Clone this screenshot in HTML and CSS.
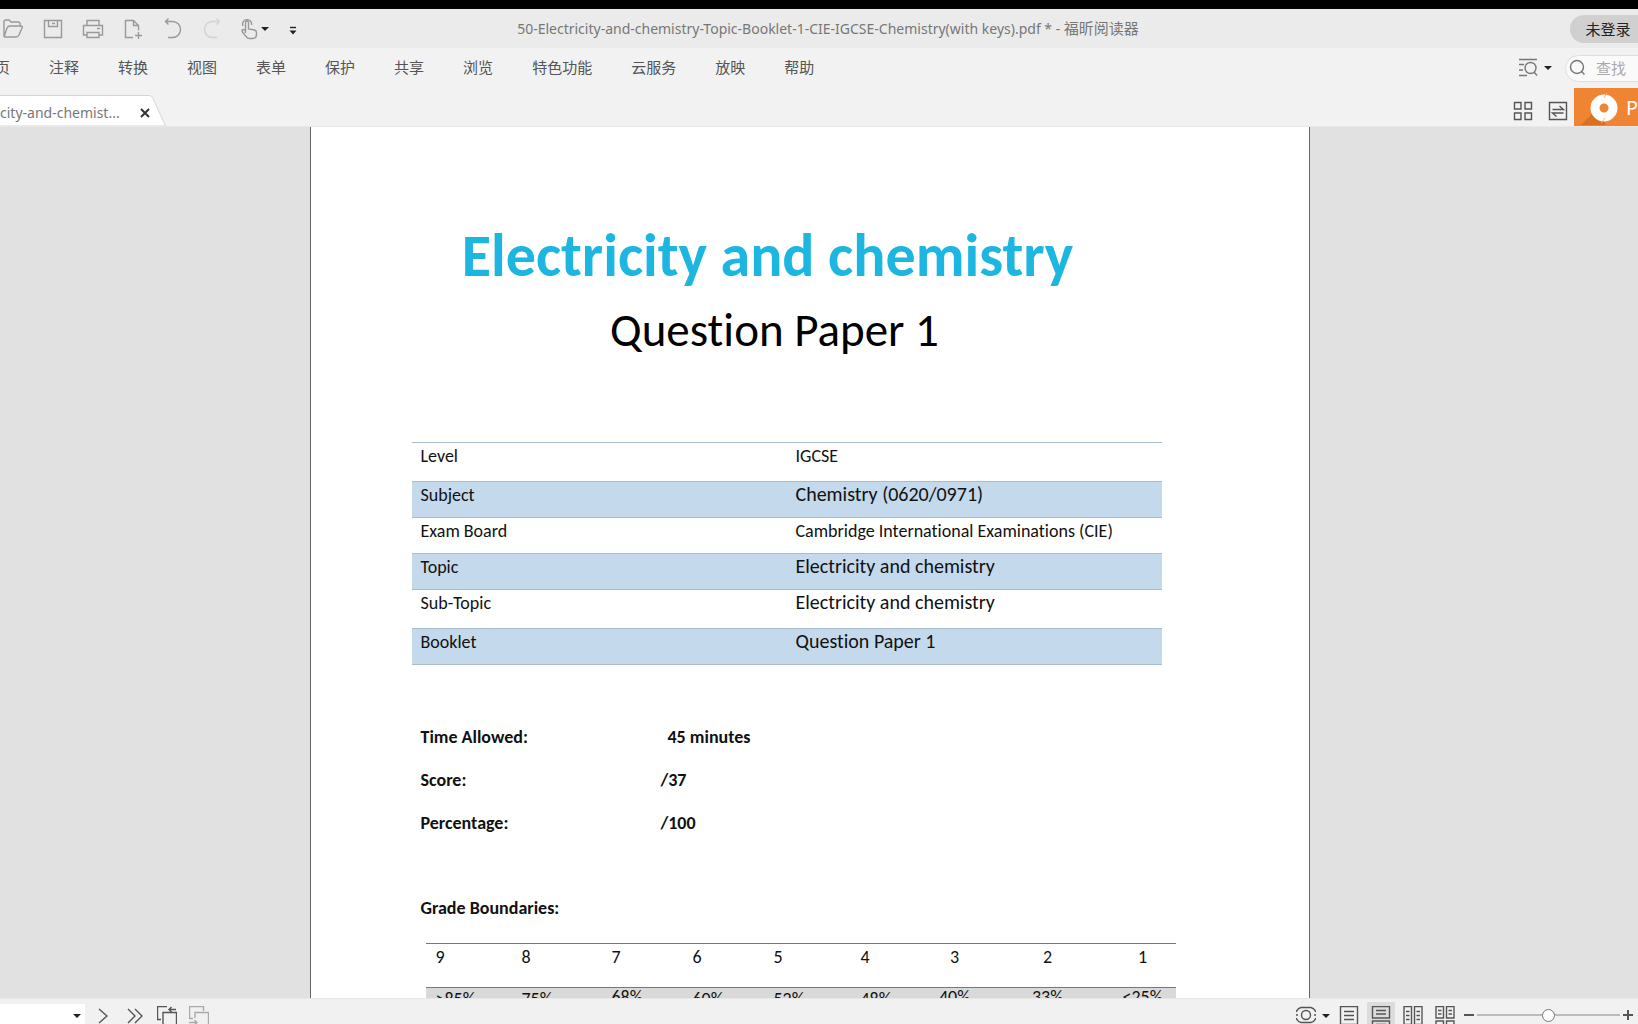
FILE: index.html
```html
<!DOCTYPE html>
<html lang="zh-CN">
<head>
<meta charset="utf-8">
<title>福昕阅读器</title>
<link rel="stylesheet" href="styles.css">
</head>
<body>
<header class="titlebar">
  <div class="quick">
    <button aria-label="打开"><svg class="icon" viewBox="0 0 24 24"><path d="M3 20V5q0-2 2-2h3l2 2h7q2 0 2 2v2M3 20L6 11q1-2 3-2h11q2 0 1 2l-3 7q-1 2-3 2H4q-1 0-1-2"/></svg></button>
    <button aria-label="保存"><svg class="icon" viewBox="0 0 24 24"><path d="M3.500 3.500h17v17h-17zM7.500 3.500v6h9v-6M11 6.500h3"/></svg></button>
    <button aria-label="打印"><svg class="icon" viewBox="0 0 24 24"><path d="M6 8V3.500h12V8M6 18H2.500V8.500h19V18H18M6 15.500h12v5H6zM16 11.500h3"/></svg></button>
    <button aria-label="新建"><svg class="icon" viewBox="0 0 24 24"><path d="M12 20.500H4.500v-17h8l5 5v5M12.500 3.500v5h5M17.500 15v7M14 18.500h7"/></svg></button>
    <button aria-label="撤销"><svg class="icon" viewBox="0 0 24 24"><path d="M4.500 4.500h7a7.500 7.500 0 0 1 0 16H7M7.500 1.500l-3 3 3 3"/></svg></button>
    <button aria-label="重做"><svg class="icon faint" viewBox="0 0 24 24"><path d="M18.500 4.500h-7a7.500 7.500 0 0 0 0 16H16M15.500 1.500l3 3-3 3"/></svg></button>
    <button class="with-caret" aria-label="手型工具"><svg class="icon" viewBox="0 0 24 24"><path d="M6.500 16V6q0-2 1.500-2t1.500 2v6l6 1q2 .5 2 2.500v2q0 4-4 4h-3q-2 0-3-1.500l-4-5q-1-2 .5-2.500l3 1M4 9a4.500 4.500 0 1 1 8.500-1"/></svg><span class="caret"></span></button>
    <button aria-label="自定义"><svg class="icon" viewBox="0 0 24 24"><path class="dark" d="M9 10.500h6"/><path class="solid" d="M8.500 13.500h7l-3.500 4z"/></svg></button>
  </div>
  <h1 class="title">50-Electricity-and-chemistry-Topic-Booklet-1-CIE-IGCSE-Chemistry(with keys).pdf * - <span>福昕阅读器</span></h1>
  <button class="login">未登录</button>
</header>

<div class="menubar">
  <nav class="menu">
    <a href="#">主页</a><a href="#">注释</a><a href="#">转换</a><a href="#">视图</a><a href="#">表单</a><a href="#">保护</a><a href="#">共享</a><a href="#">浏览</a><a href="#">特色功能</a><a href="#">云服务</a><a href="#">放映</a><a href="#">帮助</a>
  </nav>
  <button class="find-mode" aria-label="高级查找"><svg class="icon mid" viewBox="0 0 20 20"><path d="M1 1.500h18M1 6.500h5M1 12h4M1 17.500h8"/><circle cx="12.500" cy="10" r="5.500"/><path d="M16 14l3 3.500"/></svg><span class="caret"></span></button>
  <label class="search"><svg class="icon mid" viewBox="0 0 20 20"><circle cx="9" cy="9" r="6.500"/><path d="M13.500 13.500l3 3"/></svg><input type="text" placeholder="查找" aria-label="查找"></label>
</div>

<div class="tabbar">
  <div class="tab">
    <svg class="tab-shape" viewBox="0 0 166 31"><path d="M-1 .5H149q3 0 4 3L165.500 31H-1z"/></svg>
    <span>city-and-chemist...</span>
    <button aria-label="关闭"><svg viewBox="0 0 12 12"><path d="M2 2l8 8M10 2l-8 8"/></svg></button>
  </div>
  <div class="tab-tools">
    <button aria-label="缩略图"><svg class="icon deep" viewBox="0 0 20 20"><path d="M1.500 1.500h6.500v6.500h-6.500zM12 1.500h6.500v6.500H12zM1.500 12h6.500v6.500h-6.500zM12 12h6.500v6.500H12z"/></svg></button>
    <button aria-label="切换"><svg class="icon deep" viewBox="0 0 20 20"><path d="M1.500 1.500h17v17h-17zM4.500 8.500h11l-4-3.500M15.500 12h-11l4 3.500"/></svg></button>
    <button class="promo"><svg viewBox="0 0 30 34"><path class="shade" d="M-8 34L6 20l10 10v4z"/><circle cx="15" cy="17" r="9"/><path class="cut" d="M18 2l-3 5M12 32l4-5"/></svg>P</button>
  </div>
</div>

<main class="viewer">
  <article class="page">
    <h2>Electricity and chemistry</h2>
    <p class="subtitle">Question Paper 1</p>
    <table class="info">
      <tr class="tall"><th>Level</th><td>IGCSE</td></tr>
      <tr><th>Subject</th><td class="wide">Chemistry (0620/0971)</td></tr>
      <tr><th>Exam Board</th><td>Cambridge International Examinations (CIE)</td></tr>
      <tr><th>Topic</th><td class="wide">Electricity and chemistry</td></tr>
      <tr class="tall"><th>Sub-Topic</th><td class="wide">Electricity and chemistry</td></tr>
      <tr><th>Booklet</th><td class="wide">Question Paper 1</td></tr>
    </table>
    <dl class="facts">
      <dt>Time Allowed:</dt><dd class="indent">45 minutes</dd>
      <dt>Score:</dt><dd>/37</dd>
      <dt>Percentage:</dt><dd>/100</dd>
    </dl>
    <h3>Grade Boundaries:</h3>
    <table class="grades">
      <colgroup><col class="c9"><col class="c8"><col class="c7"><col class="c6"><col class="c5"><col class="c4"><col class="c3"><col class="c2"><col class="c1"></colgroup>
      <tr><th>9</th><th>8</th><th>7</th><th>6</th><th>5</th><th>4</th><th class="mid-col">3</th><th class="mid-col">2</th><th class="mid-col">1</th></tr>
      <tr><td>&gt;85%</td><td>75%</td><td class="raised">68%</td><td>60%</td><td>52%</td><td>48%</td><td class="mid-col raised">40%</td><td class="mid-col raised">33%</td><td class="mid-col raised">&lt;25%</td></tr>
    </table>
  </article>
</main>

<footer class="statusbar">
  <div class="pager">
    <button class="page-select" aria-label="页码"><span class="caret"></span></button>
    <button aria-label="下一页"><svg class="icon deep" viewBox="0 0 20 20"><path d="M6 3l8 7-8 7"/></svg></button>
    <button aria-label="最后一页"><svg class="icon deep" viewBox="0 0 20 20"><path d="M3 3l7 7-7 7M10 3l7 7-7 7"/></svg></button>
    <button aria-label="上一视图"><svg class="icon deep" viewBox="0 0 20 20"><path d="M4 13.500H.500v-13H10M6 6.500h13.500v13H6zM19 3.500h-7M14.500 1l-2.500 2.500 2.500 2.500"/></svg></button>
    <button aria-label="下一视图"><svg class="icon pale" viewBox="0 0 20 20"><path d="M4 12.500H.500v-12h14V5M6 12V6.500h13.500v13H11M0 16.500h8M5.500 14l2.500 2.500-2.500 2.500"/></svg></button>
  </div>
  <div class="view-tools">
    <button class="eye" aria-label="阅读模式"><svg class="icon deep" viewBox="0 0 20 20"><circle cx="10" cy="9" r="4.500"/><path d="M0 6q2-4 5-4.500h10q3 .5 5 4.500M0 12q2 4 5 4.500h10q3-.5 5-4.500M0 9h2M18 9h2"/></svg><span class="caret"></span></button>
    <button aria-label="单页"><svg class="icon deep" viewBox="0 0 20 20"><path d="M1.500.500h17v18h-17zM5 5.500h10M5 9.500h10M5 13.500h10"/></svg></button>
    <button class="active" aria-label="连续"><svg class="icon deep" viewBox="0 0 20 20"><path d="M1.500.500h17v11.500h-17zM5 4.500h10M5 8h10M1.500 20v-5h17v5M5 18.500h10"/></svg></button>
    <button aria-label="双页"><svg class="icon deep" viewBox="0 0 20 20"><path d="M1 .500h7.500v18H1zM11.500.500H19v18h-7.500zM3 5.500h3.500M3 9.500h3.500M3 13.500h3.500M13.500 5.500H17M13.500 9.500H17M13.500 13.500H17"/></svg></button>
    <button aria-label="连续双页"><svg class="icon deep" viewBox="0 0 20 20"><path d="M1 .500h7.500v11.500H1zM11.500.500H19v11.500h-7.500zM3 4.500h3.500M3 8h3.500M13.500 4.500H17M13.500 8H17M1 20v-5h7.500v5M11.500 20v-5H19v5"/></svg></button>
    <button class="zoom" aria-label="缩小"><svg viewBox="0 0 12 20"><path d="M1 9h10"/></svg></button>
    <input class="slider" type="range" min="0" max="100" value="50" aria-label="缩放">
    <button class="zoom" aria-label="放大"><svg viewBox="0 0 12 20"><path d="M1 9h10M6 4v10"/></svg></button>
  </div>
</footer>
</body>
</html>
```
FILE: styles.css
```css
* { box-sizing: border-box; }

body {
  margin: 0;
  height: 100vh;
  display: flex;
  flex-direction: column;
  overflow: hidden;
  border-top: 9px solid #000;
  background: #f2f2f2;
  color: #555;
  font: 15px/20px "Noto Sans", "Noto Sans CJK SC", sans-serif;
}

button {
  flex: none;
  display: flex;
  align-items: center;
  justify-content: center;
  padding: 0;
  border: 0;
  background: none;
  color: inherit;
  font: inherit;
}

.icon {
  flex: none;
  width: 20px;
  height: 20px;
  fill: none;
  stroke: #999;
  stroke-width: 1.4;
}
.icon.faint { stroke: #d2d2d2; }
.icon.mid { stroke: #777; }
.icon.deep { stroke: #555; }
.icon.pale { stroke: #aaa; }
.icon .dark { stroke: #222; }
.icon .solid { fill: #222; stroke: none; }

.caret {
  flex: none;
  border: 4px solid transparent;
  border-top-color: #222;
  border-bottom: 0;
}

/* Title bar */
.titlebar {
  flex: none;
  height: 39px;
  display: grid;
  grid-template-columns: 1fr auto 1fr;
  align-items: center;
  background: #ebebeb;
}
.quick { display: flex; gap: 16px; padding-left: 1px; }
.quick button { width: 24px; }
.quick .icon { width: 24px; height: 24px; }
.quick .with-caret { width: 24px; justify-content: flex-start; }
.with-caret .icon { margin: 0 -2px 0 -2px; }
.title {
  margin: 0 0 0 18px;
  color: #777;
  font-size: 14px;
  font-weight: 400;
  white-space: nowrap;
}
.title span { font-size: 15px; }
.login {
  justify-self: end;
  width: 84px;
  height: 28px;
  margin-right: -16px;
  padding-right: 8px;
  border-radius: 14px;
  background: #d0d0d0;
  color: #222;
}

/* Menu */
.menubar {
  flex: none;
  height: 40px;
  display: flex;
  align-items: center;
}
.menu {
  flex: 1;
  display: flex;
  gap: 39px;
  margin-left: -20px;
  padding-bottom: 2px;
}
.menu a { color: #555; text-decoration: none; white-space: nowrap; }
.find-mode { gap: 6px; margin-right: 13px; }
.search {
  flex: none;
  width: 93px;
  height: 27px;
  display: flex;
  align-items: center;
  gap: 8px;
  margin-right: -20px;
  padding-left: 2px;
  border: 1px solid #ddd;
  border-radius: 14px;
  background: #fafafa;
}
.search input {
  width: 50px;
  padding: 0;
  border: 0;
  background: none;
  font: inherit;
}
.search input::placeholder { color: #aaa; }

/* Document tabs */
.tabbar {
  flex: none;
  height: 39px;
  display: flex;
  justify-content: space-between;
  align-items: flex-end;
  border-bottom: 1px solid #e8e8e8;
}
.tab {
  position: relative;
  width: 166px;
  height: 31px;
  display: flex;
  align-items: center;
  gap: 20px;
  padding-top: 4px;
  color: #777;
  font-size: 14px;
}
.tab span { position: relative; width: 119px; white-space: nowrap; }
.tab button { position: relative; }
.tab button svg { width: 12px; height: 12px; stroke: #333; stroke-width: 2; }
.tab-shape {
  position: absolute;
  inset: 0;
  width: 166px;
  height: 31px;
  fill: #fff;
  stroke: #d5d5d5;
}
.tab-tools {
  height: 38px;
  display: flex;
  align-items: center;
}
.tab-tools > button { margin-right: 15px; padding-top: 8px; }
.tab-tools > button + button { margin-right: 6px; }
.tab-tools > .promo {
  width: 72px;
  height: 38px;
  justify-content: flex-start;
  gap: 7px;
  margin-right: -8px;
  padding: 2px 0 0 15px;
  overflow: hidden;
  background: #ef8532;
  color: #fff;
  font-size: 20px;
}
.promo svg { flex: none; width: 30px; height: 34px; overflow: visible; }
.promo circle { fill: none; stroke: #fff; stroke-width: 9; }
.promo .shade { fill: #d9711f; }
.promo .cut { stroke: #f3b27e; stroke-width: 1; }

/* Document */
.viewer {
  flex: 1;
  min-height: 0;
  overflow: hidden;
  padding-right: 19px;
  background: #e1e1e1;
}
.page {
  width: 1000px;
  min-height: 100%;
  margin: 0 auto;
  padding: 93px 101px 120px;
  border: solid #666;
  border-width: 0 1px;
  background: #fff;
  color: #111;
  font: 18px/24px Carlito, Lato, sans-serif;
  font-variant-ligatures: none;
}
.page h2 {
  margin: 0 84px 0 0;
  color: #1cb6e0;
  font-size: 60px;
  line-height: 72px;
  text-align: center;
}
.subtitle {
  margin: 10px 70px 84px 0;
  color: #000;
  font-size: 47px;
  line-height: 56px;
  text-align: center;
}
table { border-collapse: collapse; table-layout: fixed; }
th { font-weight: 400; text-align: left; }

.info { width: 750px; border-bottom: 1px solid #a9bccb; }
.info tr { height: 36px; border-top: 1px solid #a9bccb; }
.info .tall { height: 39px; }
.info tr:nth-child(even) { background: #c5d9ec; }
.info th, .info td {
  width: 50%;
  padding: 1px 0 0 9px;
  vertical-align: top;
}
.info .wide { font-size: 20px; line-height: 22px; }

.facts {
  display: grid;
  grid-template-columns: 240px 1fr;
  gap: 19px 0;
  margin: 60px 0 61px 9px;
  font-weight: 700;
}
.facts dd { margin: 0; }
.facts .indent { padding-left: 7px; }
.page h3 { margin: 0 0 23px 9px; font-size: 18px; }

.grades { width: 750px; margin-left: 14px; }
.grades tr { height: 44px; border-top: 1px solid #777; }
.grades tr + tr { background: #d9d9d9; }
.grades th, .grades td { padding: 1px 0 0 10px; vertical-align: top; }
.grades td { padding-top: 0; line-height: 22px; }
.grades .mid-col { padding-left: 0; text-align: center; }
.grades .raised { line-height: 18px; }
.c9 { width: 86px; }
.c8 { width: 90px; }
.c7, .c6 { width: 81px; }
.c5 { width: 87px; }
.c4 { width: 73px; }
.c3 { width: 62px; }
.c2 { width: 124px; }
.c1 { width: 66px; }

/* Status bar */
.statusbar {
  flex: none;
  height: 26px;
  display: flex;
  justify-content: space-between;
  overflow: hidden;
  border-top: 1px solid #e6e6e6;
  background: #f1f1f1;
}
.pager, .view-tools {
  height: 34px;
  display: flex;
  align-items: flex-start;
}
.pager { gap: 12px; }
.pager button, .view-tools button { padding-top: 7px; }
.pager .page-select {
  width: 85px;
  height: 32px;
  justify-content: flex-end;
  margin: 5px -4px 0 0;
  padding: 0 4px 8px 0;
  background: #fff;
}
.view-tools { padding-right: 4px; gap: 4px; }
.view-tools button { width: 28px; }
.view-tools .eye { width: 36px; gap: 6px; }
.view-tools .active { height: 32px; margin-top: 3px; padding: 4px 0 8px; background: #dcdcdc; }
.view-tools .zoom { width: 12px; }
.zoom svg { width: 12px; height: 20px; stroke: #555; stroke-width: 2; }
.slider {
  width: 143px;
  height: 18px;
  margin: 7px -2px 0;
  appearance: none;
  background: linear-gradient(#bbb, #bbb) center / 100% 2px no-repeat;
}
.slider::-webkit-slider-thumb {
  appearance: none;
  width: 13px;
  height: 13px;
  border: 1px solid #777;
  border-radius: 50%;
  background: #fff;
}
```
